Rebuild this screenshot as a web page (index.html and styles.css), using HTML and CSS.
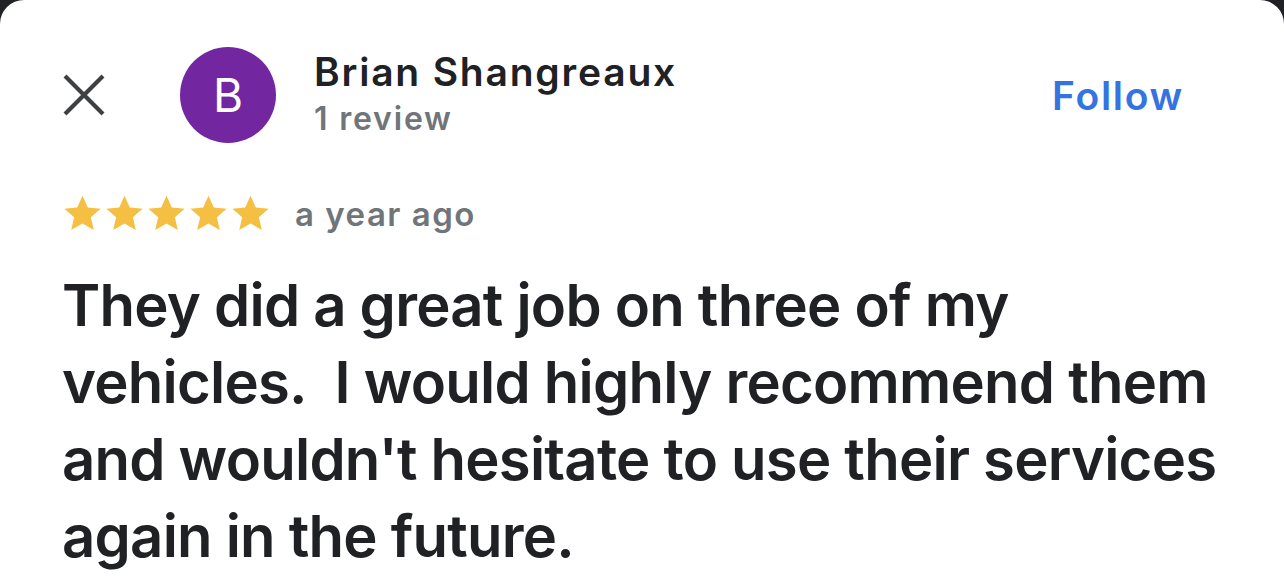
FILE: index.html
```html
<!DOCTYPE html>
<html lang="en">
<head>
  <meta charset="UTF-8" />
  <meta name="viewport" content="width=device-width, initial-scale=1.0">
  <title>Review</title>
  <link rel="stylesheet" href="styles.css">
</head>
<body>
  <div class="sheet">
    <div class="header">
      <button class="close" aria-label="Close">
        <svg width="44" height="44" viewBox="0 0 44 44">
          <path d="M3 3 L41 41 M41 3 L3 41" stroke="#3c4043" stroke-width="4.2" fill="none"/>
        </svg>
      </button>
      <div class="avatar">B</div>
      <div class="who">
        <div class="name">Brian Shangreaux</div>
        <div class="count">1 review</div>
      </div>
      <button class="follow">Follow</button>
    </div>

    <div class="rating">
      <div class="stars">
        <svg viewBox="0 0 24 24"><path d="M12 1.6l3.1 6.9 7.5.7-5.7 5 1.7 7.4L12 17.8l-6.6 3.8 1.7-7.4-5.7-5 7.5-.7z"/></svg>
        <svg viewBox="0 0 24 24"><path d="M12 1.6l3.1 6.9 7.5.7-5.7 5 1.7 7.4L12 17.8l-6.6 3.8 1.7-7.4-5.7-5 7.5-.7z"/></svg>
        <svg viewBox="0 0 24 24"><path d="M12 1.6l3.1 6.9 7.5.7-5.7 5 1.7 7.4L12 17.8l-6.6 3.8 1.7-7.4-5.7-5 7.5-.7z"/></svg>
        <svg viewBox="0 0 24 24"><path d="M12 1.6l3.1 6.9 7.5.7-5.7 5 1.7 7.4L12 17.8l-6.6 3.8 1.7-7.4-5.7-5 7.5-.7z"/></svg>
        <svg viewBox="0 0 24 24"><path d="M12 1.6l3.1 6.9 7.5.7-5.7 5 1.7 7.4L12 17.8l-6.6 3.8 1.7-7.4-5.7-5 7.5-.7z"/></svg>
      </div>
      <span class="when">a year ago</span>
    </div>

    <p class="text">They did a great job on three of my vehicles.&nbsp; I would highly recommend them and wouldn't hesitate to use their services again in the future.</p>
  </div>
</body>
</html>
```

FILE: styles.css
```css
* {
  box-sizing: border-box;
}
body {
  margin: 0;
  background: #202124;
  font-family: Inter, 'Noto Sans', sans-serif;
  color: #202124;
  height: 588px;
  overflow: hidden;
}
.sheet {
  background: #fff;
  border-radius: 24px 24px 0 0;
  min-height: 588px;
  padding: 47px 100px 0 62px;
}
.header {
  display: flex;
  align-items: center;
}
.close {
  border: none;
  background: none;
  padding: 0;
  width: 44px;
  height: 44px;
  display: flex;
}
.avatar {
  width: 96px;
  height: 96px;
  border-radius: 50%;
  background: #7227a0;
  color: #fff;
  font-size: 46px;
  display: flex;
  align-items: center;
  justify-content: center;
  margin-left: 74px;
}
.who {
  margin-left: 38px;
  flex: 1;
}
.name {
  font-size: 39px;
  font-weight: 600;
  line-height: 46px;
  letter-spacing: 1.8px;
  margin-top: -2px;
}
.count {
  font-size: 32px;
  font-weight: 600;
  color: #70757a;
  line-height: 40px;
  letter-spacing: 1.8px;
  margin-top: 4px;
}
.follow {
  border: none;
  background: none;
  padding: 0;
  font-family: inherit;
  font-size: 39px;
  font-weight: 600;
  letter-spacing: 1.7px;
  color: #3574e0;
}
.rating {
  display: flex;
  align-items: center;
  margin-top: 50px;
}
.stars {
  display: flex;
  gap: 1px;
}
.stars svg {
  width: 41px;
  height: 41px;
  fill: #f4bf42;
}
.when {
  margin-left: 24px;
  font-size: 33px;
  font-weight: 600;
  color: #70757a;
  letter-spacing: 1.5px;
}
.text {
  margin: 33px -60px 0 0;
  font-size: 58px;
  font-weight: 600;
  line-height: 77px;
  letter-spacing: -0.75px;
}
```
